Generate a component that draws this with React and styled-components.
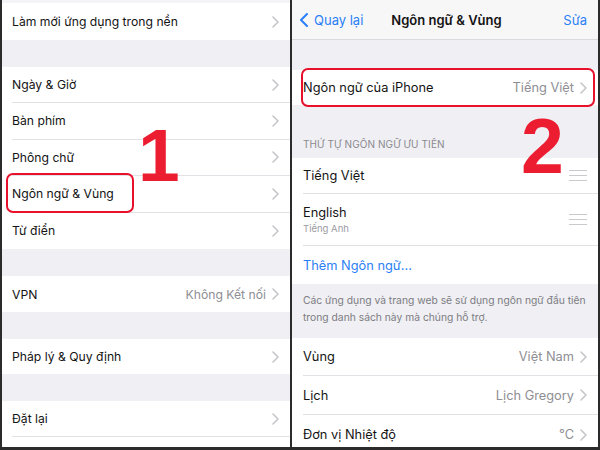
import React from 'react';
import styled, { createGlobalStyle } from 'styled-components';

const GlobalStyle = createGlobalStyle`
  html, body {
    margin: 0;
    padding: 0;
    background: #ffffff;
  }
  body {
    font-family: Inter, "Noto Sans", "Liberation Sans", sans-serif;
    -webkit-font-smoothing: antialiased;
  }
`;

const Frame = styled.div`
  width: 600px;
  height: 450px;
  box-sizing: border-box;
  display: flex;
  background: #2b2b2b;
  border-left: 2px solid #2b2b2b;
  border-right: 2px solid #2b2b2b;
  border-bottom: 3px solid #2b2b2b;
  overflow: hidden;
`;

const Panel = styled.div`
  position: relative;
  width: ${p => p.$width};
  flex: ${p => (p.$width ? 'none' : '1')};
  height: 100%;
  background: #efeff4;
  display: flex;
  flex-direction: column;
  overflow: hidden;
  --fs: ${p => p.$fs}px;
`;

const Divider = styled.div`
  width: 2px;
  flex: none;
  background: #2b2b2b;
`;

const TopStrip = styled.div`
  height: 3px;
  flex: none;
  background: #f4f4f6;
`;

const Gap = styled.div`
  height: ${p => p.$h}px;
  flex: none;
`;

const Group = styled.div`
  background: #ffffff;
  flex: none;
`;

const Row = styled.div`
  height: ${p => p.$h || 36}px;
  display: flex;
  padding-left: ${p => p.$pad || 10}px;
`;

const RowBody = styled.div`
  flex: 1;
  display: flex;
  align-items: center;
  gap: 6px;
  padding-right: 11px;
  border-bottom: ${p => (p.$last ? 'none' : '1px solid #e2e2e6')};
`;

const Label = styled.span`
  flex: 1;
  font-size: var(--fs);
  color: ${p => (p.$blue ? '#2b7ff6' : '#141414')};
  white-space: nowrap;
`;

const Stack = styled.div`
  flex: 1;
  display: flex;
  flex-direction: column;
  gap: 3px;
`;

const SubLabel = styled.span`
  font-size: 9.5px;
  color: #9a9a9f;
`;

const Value = styled.span`
  font-size: var(--fs);
  color: #8e8e93;
  white-space: nowrap;
`;

const NavBar = styled.div`
  height: 40px;
  flex: none;
  box-sizing: border-box;
  background: #f7f7f8;
  border-bottom: 1px solid #d9d9de;
  display: grid;
  grid-template-columns: 1fr auto 1fr;
  align-items: center;
  padding: 0 11px 0 8px;
`;

const NavBack = styled.span`
  display: flex;
  align-items: center;
  gap: 6px;
  font-size: 13px;
  color: #2b7ff6;
`;

const NavTitle = styled.span`
  font-size: 13px;
  font-weight: 600;
  color: #141414;
  padding-left: 6px;
`;

const NavAction = styled.span`
  justify-self: end;
  font-size: 13px;
  color: #2b7ff6;
`;

const SectionHeader = styled.div`
  height: 53px;
  flex: none;
  box-sizing: border-box;
  display: flex;
  align-items: flex-end;
  padding: 0 11px 8px;
  font-size: 10px;
  letter-spacing: 0.1px;
  color: #8a8a8f;
`;

const SectionFooter = styled.div`
  height: 54px;
  flex: none;
  box-sizing: border-box;
  padding: 8px 11px 0;
  font-size: 10.3px;
  line-height: 17px;
  white-space: nowrap;
  color: #7d7d82;
`;

const Handle = styled.span`
  width: 18px;
  display: flex;
  flex-direction: column;
  gap: 3.5px;
  & > i {
    display: block;
    height: 1.5px;
    background: #c9c9ce;
  }
`;

const Highlight = styled.div`
  position: absolute;
  left: ${p => p.$x}px;
  top: ${p => p.$y}px;
  width: ${p => p.$w}px;
  height: ${p => p.$h}px;
  box-sizing: border-box;
  border: 2px solid #e8102a;
  border-radius: 7px;
`;

const StepNumber = styled.span`
  position: absolute;
  left: ${p => p.$x}px;
  top: ${p => p.$y}px;
  font-family: "Liberation Sans", Arial, sans-serif;
  font-weight: 700;
  font-size: ${p => p.$size || 75}px;
  line-height: 1;
  color: #ec1c31;
`;

const Chevron = () => (
  <svg width="7" height="12" viewBox="0 0 7 12" fill="none">
    <polyline points="1,1 6,6 1,11" stroke="#c4c4c8" strokeWidth="1.5" strokeLinecap="round" strokeLinejoin="round" />
  </svg>
);

const BackChevron = () => (
  <svg width="8" height="14" viewBox="0 0 8 14" fill="none">
    <polyline points="7,1 1,7 7,13" stroke="#2b7ff6" strokeWidth="2" strokeLinecap="round" strokeLinejoin="round" />
  </svg>
);

const Item = ({ label, value, h, last, blue, noChevron, pad }) => (
  <Row $h={h} $pad={pad}>
    <RowBody $last={last}>
      <Label $blue={blue}>{label}</Label>
      {value && <Value>{value}</Value>}
      {!noChevron && <Chevron />}
    </RowBody>
  </Row>
);

const DragHandle = () => (
  <Handle>
    <i />
    <i />
    <i />
  </Handle>
);

const App = () => {
  return (
    <>
      <GlobalStyle />
      <Frame>
        <Panel $width="288px" $fs={12.2}>
          <TopStrip />
          <Group>
            <Item label="Làm mới ứng dụng trong nền" h={37} last />
          </Group>
          <Gap $h={27} />
          <Group>
            <Item label="Ngày & Giờ" h={36} />
            <Item label="Bàn phím" h={36.5} />
            <Item label="Phông chữ" h={36.5} />
            <Item label="Ngôn ngữ & Vùng" h={36.5} />
            <Item label="Từ điển" h={36.5} last />
          </Group>
          <Gap $h={27} />
          <Group>
            <Item label="VPN" value="Không Kết nối" h={36} last />
          </Group>
          <Gap $h={27} />
          <Group>
            <Item label="Pháp lý & Quy định" h={35} last />
          </Group>
          <Gap $h={27} />
          <Group>
            <Item label="Đặt lại" h={36} />
            <Row $h={36}>
              <RowBody $last />
            </Row>
          </Group>
          <Highlight $x={4} $y={173} $w={128} $h={40} />
          <StepNumber $x={136} $y={118}>1</StepNumber>
        </Panel>
        <Divider />
        <Panel $fs={12.8}>
          <NavBar>
            <NavBack>
              <BackChevron />
              Quay lại
            </NavBack>
            <NavTitle>Ngôn ngữ &amp; Vùng</NavTitle>
            <NavAction>Sửa</NavAction>
          </NavBar>
          <Gap $h={30} />
          <Group>
            <Item label="Ngôn ngữ của iPhone" value="Tiếng Việt" h={35} pad={11} last />
          </Group>
          <SectionHeader>THỨ TỰ NGÔN NGỮ ƯU TIÊN</SectionHeader>
          <Group>
            <Row $h={36} $pad={11}>
              <RowBody>
                <Label>Tiếng Việt</Label>
                <DragHandle />
              </RowBody>
            </Row>
            <Row $h={52} $pad={11}>
              <RowBody>
                <Stack>
                  <Label>English</Label>
                  <SubLabel>Tiếng Anh</SubLabel>
                </Stack>
                <DragHandle />
              </RowBody>
            </Row>
            <Item label="Thêm Ngôn ngữ..." h={38} pad={11} blue noChevron last />
          </Group>
          <SectionFooter>
            Các ứng dụng và trang web sẽ sử dụng ngôn ngữ đầu tiên
            <br />
            trong danh sách này mà chúng hỗ trợ.
          </SectionFooter>
          <Group>
            <Item label="Vùng" value="Việt Nam" h={38} pad={11} />
            <Item label="Lịch" value="Lịch Gregory" h={39} pad={11} />
            <Item label="Đơn vị Nhiệt độ" value="°C" h={39} pad={11} last />
          </Group>
          <Highlight $x={9} $y={68} $w={294} $h={39} />
          <StepNumber $x={229} $y={108} $size={77}>2</StepNumber>
        </Panel>
      </Frame>
    </>
  );
};

export default App;
